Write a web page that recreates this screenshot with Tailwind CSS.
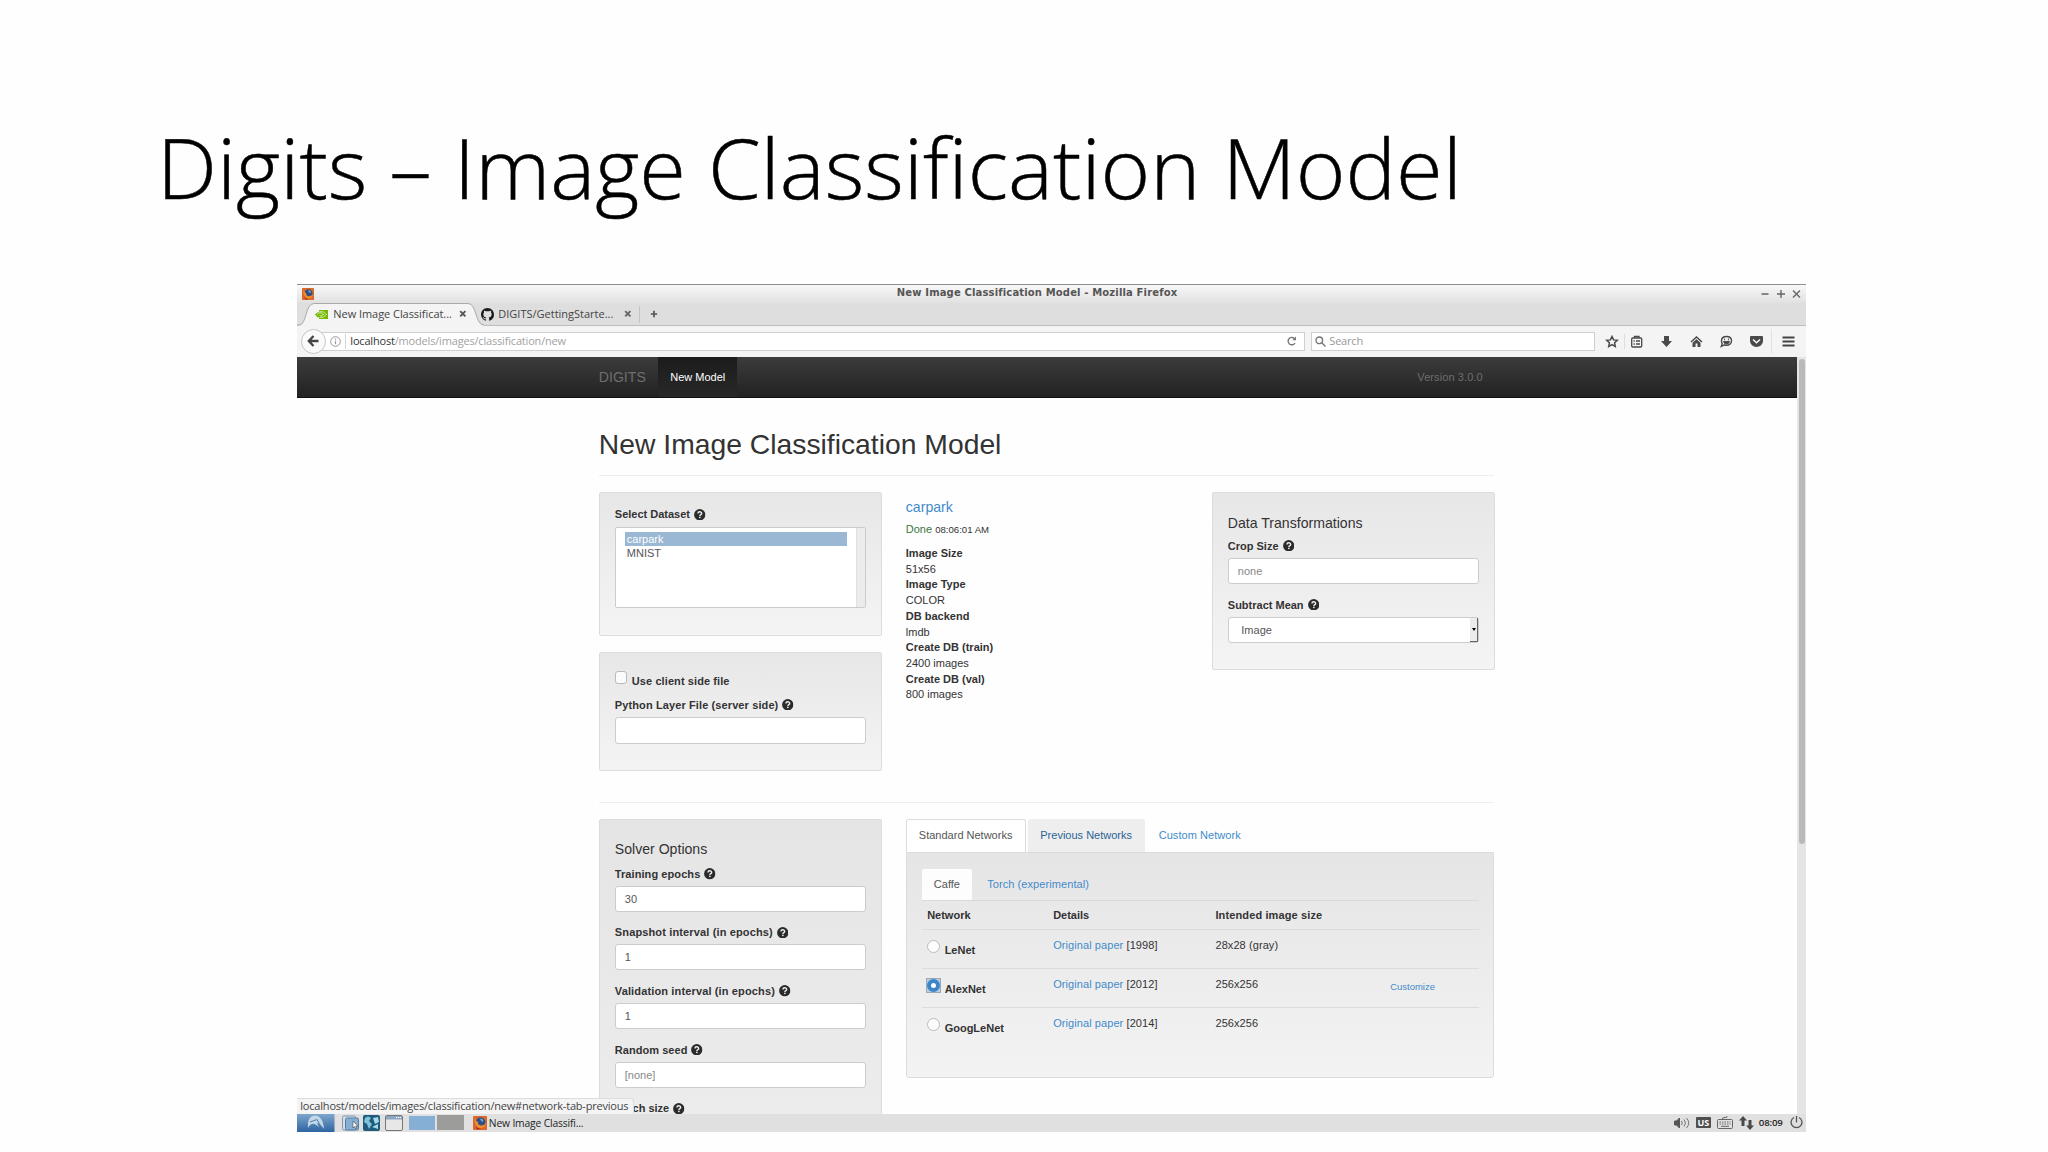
<!DOCTYPE html>
<html lang="en">
<head>
<meta charset="utf-8">
<title>Digits – Image Classification Model</title>
<script src="https://cdn.jsdelivr.net/npm/@tailwindcss/browser@4"></script>
</head>
<body class="w-[2048px] h-[1152px] overflow-hidden bg-[#fefefe]">
<svg class="hidden">
  <symbol id="help" viewBox="0 0 12 12"><circle cx="6" cy="6" r="5.900" fill="#2b2b2b"/><path d="M4.100 4.700C4.100 2.400 8 2.400 8 4.600C8 5.900 6.100 5.900 6.100 7.200" fill="none" stroke="#eee" stroke-width="1.500"/><rect x="5.300" y="8" width="1.600" height="1.500" fill="#eee"/></symbol>
  <symbol id="firefox" viewBox="0 0 14 14"><rect width="14" height="14" rx="1" fill="#d9682b"/><circle cx="7.500" cy="6.600" r="5" fill="#2d4f86"/><path d="M8 2.500Q11 3 10 6Q8 5 7 3.500Z" fill="#6fa8d8"/><path d="M1.500 2Q1 11 7 12.500Q12.500 12.500 13 6Q11.500 9.500 8 9.500Q4.500 9 5 6L3.500 5Z" fill="#f08a2c"/><path d="M2 9Q4 13 9 12.800L4 13.500Z" fill="#a82c1c"/></symbol>
</svg>

<h1 class="pt-[117px] pl-[157px] h-[284px]"><span class="inline-block origin-left scale-x-[1.0226] whitespace-nowrap font-['Open_Sans',sans-serif] font-light text-[83px] leading-[100px] text-black [-webkit-text-stroke:0.500px_#000]">Digits – Image Classification Model</span></h1>

<main class="ml-[297.300px] w-[1508.500px] h-[848px] flex flex-col font-['Liberation_Sans',Arial,sans-serif] text-[11px] leading-4 text-[#333]">
  <!-- window title bar -->
  <header class="h-[19px] shrink-0 border-t border-[#8f8f8f] bg-linear-to-b from-[#f8f8f8] to-[#e1e1e1] flex items-center">
    <svg class="ml-[5px] w-3 h-3"><use href="#firefox"/></svg>
    <div class="flex-1 pb-[2px] text-center font-['DejaVu_Sans',sans-serif] font-bold text-[10px] tracking-[0.150px] text-[#555]">New Image Classification Model - Mozilla Firefox</div>
    <svg class="w-[42px] h-4 mr-[4px]" viewBox="0 0 42 16" fill="none" stroke="#666" stroke-width="1.400"><path d="M1.500 8h7M17 8h8M21 4v8M33 4.500l7 7M40 4.500l-7 7"/></svg>
  </header>
  <!-- browser tabs -->
  <div class="h-[23px] shrink-0 relative bg-[#dedede] border-b border-[#bdbdbd] font-['Open_Sans',sans-serif] text-[#444] flex items-center">
    <svg class="absolute left-0 top-0 w-[190px] h-[23px]" viewBox="0 0 190 23"><path d="M0 22.500H2C10 22.500 8 .5 17 .5H171C180 .5 178 22.500 187 22.500V23H0Z" fill="#f4f4f4"/><path d="M0 22H2C10 22 8 .5 17 .5H171C180 .5 178 22 187 22" fill="none" stroke="#aaa"/></svg>
    <svg class="relative ml-[18px] w-[13px] h-[9px]" viewBox="0 0 13 9"><path d="M4 0H13V9H4Z" fill="#76b900"/><path d="M0 4.500Q4 0 9 4Q6 9 4 7.500Q1.500 7 0 4.500Z" fill="#76b900"/><path d="M2 4.500Q5 1 8.500 4.500Q6 7 4.500 5.500M4.500 1.500Q9 1 11.500 4.500Q9 8 4.500 7.500" fill="none" stroke="#e9f5d5" stroke-width=".8"/></svg>
    <span class="relative ml-[5px] w-[124.500px] whitespace-nowrap tracking-[-0.050px]">New Image Classificat...</span>
    <svg class="relative ml-[1px] w-2 h-2" viewBox="0 0 8 8"><path d="M1.200 1.200l5.200 5.200M6.400 1.200l-5.200 5.200" stroke="#555" stroke-width="1.900"/></svg>
    <svg class="ml-[14.500px] w-[13px] h-[13px]" viewBox="0 0 16 16" fill="#1b1b1b"><path d="M8 0C3.580 0 0 3.580 0 8c0 3.540 2.290 6.530 5.470 7.590.4.070.55-.17.55-.38 0-.19-.01-.82-.01-1.490-2.010.37-2.530-.49-2.690-.94-.09-.23-.48-.94-.82-1.130-.28-.15-.68-.52-.01-.53.63-.01 1.080.58 1.230.82.72 1.210 1.870.87 2.330.66.070-.52.28-.87.51-1.070-1.780-.2-3.640-.89-3.640-3.950 0-.87.31-1.590.82-2.150-.08-.2-.36-1.020.08-2.120 0 0 .67-.21 2.200.82a7.600 7.600 0 014 0c1.530-1.040 2.200-.82 2.200-.82.44 1.100.16 1.920.08 2.120.51.56.82 1.270.82 2.150 0 3.070-1.870 3.750-3.650 3.950.29.25.54.73.54 1.480 0 1.070-.01 1.930-.01 2.200 0 .21.15.46.55.38A8 8 0 0016 8c0-4.420-3.580-8-8-8z"/></svg>
    <span class="ml-[4px] w-[123px] whitespace-nowrap">DIGITS/GettingStarte...</span>
    <svg class="ml-[3px] w-2 h-2" viewBox="0 0 8 8"><path d="M1.200 1.200l5.200 5.200M6.400 1.200l-5.200 5.200" stroke="#666" stroke-width="1.900"/></svg>
    <i class="ml-[6.500px] w-px h-[17px] bg-[#c4c4c4]"></i>
    <svg class="ml-[10px] w-2 h-2" viewBox="0 0 8 8"><path d="M4 .8v6.400M.8 4h6.400" stroke="#555" stroke-width="1.700"/></svg>
  </div>
  <!-- address bar -->
  <div class="h-[31px] pb-px shrink-0 bg-[#f4f4f4] flex items-center font-['Open_Sans',sans-serif]">
    <div class="ml-[3.500px] w-[25px] h-[25px] rounded-full border border-[#c6c6c6] bg-[#fafafa] z-10 flex items-center justify-center shrink-0">
      <svg class="w-3 h-3" viewBox="0 0 12 12" fill="none" stroke="#444" stroke-width="2.300"><path d="M6.500 1L1.800 6l4.700 5M2 6h9.500"/></svg>
    </div>
    <div class="-ml-[6px] w-[985px] h-[19px] bg-white border border-[#cfcfcf] flex items-center pl-[9px] shrink-0">
      <svg class="w-[11px] h-[11px]" viewBox="0 0 11 11" fill="none" stroke="#999"><circle cx="5.500" cy="5.500" r="4.800"/><path d="M5.500 4.800v3.400M5.500 2.600v1.200" stroke-width="1.200"/></svg>
      <i class="ml-[4px] w-px h-[15px] bg-[#d5d5d5]"></i>
      <span class="ml-[4.500px] flex-1 text-[#a2a2a2] whitespace-nowrap tracking-[-0.180px]"><span class="text-[#333]">localhost</span>/models/images/classification/new</span>
      <svg class="mr-[7px] w-[10px] h-[10px]" viewBox="0 0 10 10" fill="none" stroke="#777" stroke-width="1.400"><path d="M8 7A3.700 3.700 0 118 3.200"/><path d="M9 .5V4.200H5.300Z" fill="#777" stroke="none"/></svg>
    </div>
    <div class="ml-[6px] w-[284px] h-[19px] bg-white border border-[#cfcfcf] flex items-center pl-[3px] shrink-0">
      <svg class="w-[11px] h-[11px]" viewBox="0 0 11 11" fill="none" stroke="#777" stroke-width="1.400"><circle cx="4.300" cy="4.300" r="3.300"/><path d="M6.800 6.800L10.500 10.500"/></svg>
      <span class="ml-[3.500px] text-[#999] tracking-[-0.200px]">Search</span>
    </div>
    <div class="flex items-center ml-[10px] text-[#4a4a4a]">
      <svg class="w-[14px] h-[13px]" viewBox="0 0 14 13" fill="none" stroke="#4a4a4a" stroke-width="1.500"><path d="M7 1.500L8.600 4.900 12.300 5.300 9.600 7.800 10.300 11.500 7 9.700 3.700 11.500 4.400 7.800 1.700 5.300 5.400 4.900Z"/></svg>
      <i class="ml-[5px] -mr-[3px] w-px h-[15px] bg-[#ddd]"></i>
      <svg class="w-[30px] h-[13px]" viewBox="0 0 30 13" fill="none" stroke="#4a4a4a" stroke-width="1.300"><rect x="9.700" y="3" width="10" height="9" rx="1"/><path d="M12.500 3V1.500h4.500V3M11.500 6h1.300M14 6h4M11.500 9h1.300M14 9h4"/></svg>
      <svg class="w-[29px] h-[13px]" viewBox="0 0 29 13" fill="#4a4a4a"><path d="M12 1h5v5h3l-5.500 6L9 6h3z"/></svg>
      <svg class="w-[31px] h-[13px]" viewBox="0 0 31 13" fill="#4a4a4a"><path d="M15.500 1l6 5.500-1 1-5-4.500-5 4.500-1-1z"/><path d="M11.500 7.800l4-3.600 4 3.600V12h-3V8.500h-2V12h-3z"/></svg>
      <svg class="w-[29px] h-[13px]" viewBox="0 0 29 13"><path d="M14.500 1.500c3 0 5 1.800 5 4.300s-2 4.500-5 4.500c-.8 0-1.500-.1-2-.4L9.300 11.500l.9-2.800C9.700 8 9.500 7 9.500 5.800c0-2.500 2-4.300 5-4.300z" fill="none" stroke="#4a4a4a" stroke-width="1.400"/><path d="M12.600 3.500v1.800M16.400 3.500v1.800M11.500 6.500h6Q17 9 14.500 9T11.500 6.500z" stroke="#4a4a4a" fill="#4a4a4a"/></svg>
      <svg class="w-[30px] h-[13px]" viewBox="0 0 30 13"><path d="M10 1h11q1 0 1 1v4a6.500 6 0 01-13 0V2q0-1 1-1z" fill="#4a4a4a"/><path d="M12 4.500l3.500 3.300 3.500-3.300" fill="none" stroke="#fff" stroke-width="1.400"/></svg>
      <i class="w-px h-[25px] bg-[#e2e2e2]"></i>
      <svg class="ml-[10px] w-[13px] h-[11px]" viewBox="0 0 13 11" stroke="#444" stroke-width="2"><path d="M.5 1.500h12M.5 5.500h12M.5 9.500h12"/></svg>
    </div>
  </div>
  <!-- page -->
  <div class="h-[756.500px] shrink-0 flex bg-[#e6e5e6] relative">
    <div class="w-[1499.500px] overflow-hidden bg-[#fefefe]">
      <nav class="h-[40.700px] pl-[301.500px] flex items-center bg-linear-to-b from-[#3c3c3c] to-[#222] border-b border-[#101010]">
        <span class="w-[59.500px] text-[14.100px] text-[#6e6e6e]">DIGITS</span>
        <span class="w-[79px] h-full pt-[12px] text-center text-white bg-linear-to-b from-[#1c1c1c] to-[#282828]">New Model</span>
        <span class="ml-[680px] text-[#6e6e6e] tracking-[0.100px]">Version 3.0.0</span>
      </nav>
      <div class="ml-[302px] w-[895px]">
        <h2 class="mt-[26px] pb-[11px] border-b border-[#eee] text-[28.300px] leading-10 -ml-[0.500px]">New Image Classification Model</h2>
        <section class="mt-[16px] h-[311.500px] border-b border-[#eee] grid grid-cols-[282.500px_282.500px_282.500px] gap-x-[24px] items-start">
          <div>
            <div class="h-[144px] rounded-[2px] border border-[#dcdcdc] bg-linear-to-b from-[#e8e7e8] to-[#f5f4f5] px-[14.500px] pt-[13.700px]">
              <div class="flex items-center gap-1 font-bold">Select Dataset<svg class="w-[11.500px] h-[11.500px]"><use href="#help"/></svg></div>
              <div class="mt-[5px] h-[80.500px] rounded-[2px] border border-[#ccc] bg-white flex leading-[14px] text-[#555]">
                <div class="pt-[4px] pl-[9px] w-[240px]">
                  <div class="w-[222px] h-[14px] pl-[2px] bg-[#9ab7d4] text-white">carpark</div>
                  <div class="h-[14px] pl-[2px]">MNIST</div>
                </div>
                <div class="flex-1 bg-[#ebebeb] border-l border-[#e0e0e0]"></div>
              </div>
            </div>
            <div class="mt-[16.500px] h-[118.500px] rounded-[2px] border border-[#dcdcdc] bg-linear-to-b from-[#e8e7e8] to-[#f5f4f5] px-[14.500px] pt-[19.500px] font-bold">
              <div class="flex items-center gap-[4.500px] tracking-[0.090px]"><i class="w-[12.500px] h-[12.500px] -mt-[6px] rounded-[3px] border border-[#bbb] bg-[#fbfbfb]"></i>Use client side file</div>
              <div class="mt-2 flex items-center gap-1 tracking-[0.110px]">Python Layer File (server side)<svg class="w-[11.500px] h-[11.500px]"><use href="#help"/></svg></div>
              <div class="mt-[4.500px] h-[26.500px] rounded-[3px] border border-[#ccc] bg-white"></div>
            </div>
          </div>
          <div class="pt-[7px]">
            <div class="text-[14.100px] text-[#428bca]">carpark</div>
            <div class="mt-[6.400px]"><span class="text-[#3c763d]">Done</span> <small class="text-[9.600px]">08:06:01 AM</small></div>
            <dl class="mt-[8px] leading-[15.700px] [&>dt]:font-bold">
              <dt>Image Size</dt><dd>51x56</dd>
              <dt>Image Type</dt><dd>COLOR</dd>
              <dt>DB backend</dt><dd>lmdb</dd>
              <dt>Create DB (train)</dt><dd>2400 images</dd>
              <dt>Create DB (val)</dt><dd>800 images</dd>
            </dl>
          </div>
          <div class="h-[178.500px] rounded-[2px] border border-[#dcdcdc] bg-linear-to-b from-[#e8e7e8] to-[#f5f4f5] px-[14.500px] pt-[22px]">
            <div class="text-[14.100px]">Data Transformations</div>
            <div class="mt-[7px] flex items-center gap-1 font-bold">Crop Size<svg class="w-[11.500px] h-[11.500px]"><use href="#help"/></svg></div>
            <div class="mt-[4.500px] h-[26px] rounded-[3px] border border-[#ccc] bg-white px-[9px] leading-[25px] text-[#888]">none</div>
            <div class="mt-[12.400px] flex items-center gap-1 font-bold">Subtract Mean<svg class="w-[11.500px] h-[11.500px]"><use href="#help"/></svg></div>
            <div class="mt-[4px] h-[26px] rounded-[3px] border border-[#ccc] bg-white pl-[12.500px] leading-[25px] text-[#555] flex justify-between">Image<span class="w-[8px] bg-[#ececec] border-r-[1.500px] border-b border-[#666] flex items-center justify-center"><svg class="w-1 h-[3px]" viewBox="0 0 4 3"><path d="M0 0h4L2 3z"/></svg></span></div>
          </div>
        </section>
        <section class="mt-4 flex items-start gap-[24px]">
          <div class="w-[282.500px] h-[380px] rounded-[2px] border border-[#dcdcdc] bg-linear-to-b from-[#e6e5e6] to-[#efeeef] px-[14.500px] pt-[21.300px] font-bold">
            <div class="mb-[8.400px] text-[14.100px] font-normal">Solver Options</div>
            <div class="flex items-center gap-1 tracking-[0.080px]">Training epochs<svg class="w-[11.500px] h-[11.500px]"><use href="#help"/></svg></div>
            <div class="mt-1 mb-[12.600px] h-[26px] rounded-[3px] border border-[#ccc] bg-white px-[9px] leading-[25px] font-normal text-[#555]">30</div>
            <div class="flex items-center gap-1 tracking-[0.140px]">Snapshot interval (in epochs)<svg class="w-[11.500px] h-[11.500px]"><use href="#help"/></svg></div>
            <div class="mt-1 mb-[12.600px] h-[26px] rounded-[3px] border border-[#ccc] bg-white px-[9px] leading-[25px] font-normal text-[#555]">1</div>
            <div class="flex items-center gap-1 tracking-[0.140px]">Validation interval (in epochs)<svg class="w-[11.500px] h-[11.500px]"><use href="#help"/></svg></div>
            <div class="mt-1 mb-[12.600px] h-[26px] rounded-[3px] border border-[#ccc] bg-white px-[9px] leading-[25px] font-normal text-[#555]">1</div>
            <div class="flex items-center gap-1 tracking-[0.050px]">Random seed<svg class="w-[11.500px] h-[11.500px]"><use href="#help"/></svg></div>
            <div class="mt-1 mb-[12.600px] h-[26px] rounded-[3px] border border-[#ccc] bg-white px-[9px] leading-[25px] font-normal text-[#888]">[none]</div>
            <div class="flex items-center gap-1">Batch size<svg class="w-[11.500px] h-[11.500px]"><use href="#help"/></svg></div>
          </div>
          <div class="w-[589px]">
            <div class="h-[32.500px] flex gap-[2px] leading-4">
              <span class="w-[120px] pt-[7.200px] text-center border border-b-0 border-[#dcdcdc] rounded-t-[3px] bg-white text-[#555]">Standard Networks</span>
              <span class="w-[117px] pt-[8.200px] text-center rounded-t-[3px] bg-[#eee] text-[#2a6496]">Previous Networks</span>
              <span class="pl-[12px] pt-[8.200px] text-[#428bca] tracking-[0.060px]">Custom Network</span>
            </div>
            <div class="h-[226px] rounded-b-[3px] border border-[#dcdcdc] bg-linear-to-b from-[#e6e5e6] to-[#f4f3f4] pl-[15px] pr-[14px] pt-[16px]">
              <div class="flex h-[32px] border-b border-[#dadada]">
                <span class="w-[50.500px] pt-[7.500px] text-center rounded-t-[2px] bg-[#fdfdfd] text-[#555]">Caffe</span>
                <span class="ml-[15px] pt-[7.500px] text-[#428bca] tracking-[0.080px]">Torch (experimental)</span>
              </div>
              <div class="grid grid-cols-[126px_162.300px_174.700px_1fr] pl-[5.500px] [&>b]:pt-[6.500px] h-[29.500px] border-b border-[#dcdcdc]"><b>Network</b><b>Details</b><b class="tracking-[0.120px]">Intended image size</b></div>
              <div class="grid grid-cols-[126px_162.300px_174.700px_1fr] pl-[5.500px] h-[39px] border-b border-[#dcdcdc] [&>span]:pt-[6.500px] [&>span]:tracking-[0.080px]">
                <b class="flex gap-[4.500px] pt-[12px]"><i class="w-[13px] h-[13px] -mt-[2px] rounded-full border border-[#bbb] bg-[#fdfdfd]"></i>LeNet</b>
                <span><a class="text-[#428bca]">Original paper</a> [1998]</span><span>28x28 (gray)</span>
              </div>
              <div class="grid grid-cols-[126px_162.300px_174.700px_1fr] pl-[5.500px] h-[39px] border-b border-[#dcdcdc] [&>span]:pt-[6.500px] [&>span]:tracking-[0.080px]">
                <b class="flex gap-[3.500px] pt-[12px]"><i class="w-[15px] h-[15px] -ml-px -mt-[3px] border border-[#9aa9b8] bg-[#b9cde2] flex items-center justify-center"><i class="w-[13px] h-[13px] shrink-0 rounded-full border-[4.500px] border-[#3b85c8] bg-white"></i></i>AlexNet</b>
                <span><a class="text-[#428bca]">Original paper</a> [2012]</span><span>256x256</span><a class="pt-[10px] text-[9.500px] text-[#428bca]">Customize</a>
              </div>
              <div class="grid grid-cols-[126px_162.300px_174.700px_1fr] pl-[5.500px] h-[39px] [&>span]:pt-[6.500px] [&>span]:tracking-[0.080px]">
                <b class="flex gap-[4.500px] pt-[12px]"><i class="w-[13px] h-[13px] -mt-[2px] rounded-full border border-[#bbb] bg-[#fdfdfd]"></i>GoogLeNet</b>
                <span><a class="text-[#428bca]">Original paper</a> [2014]</span><span>256x256</span>
              </div>
            </div>
          </div>
        </section>
      </div>
    </div>
    <div class="flex-1 pt-[2px] pl-[2px]"><div class="w-[6px] h-[485px] rounded-[3px] bg-[#b9b9b9]"></div></div>
    <!-- link target shown over the page while hovering a tab -->
    <div class="absolute left-0 bottom-0 w-[337px] h-[15.500px] pl-[3px] rounded-tr-[3px] border-t border-r border-[#ddd] bg-[#f4f4f4] font-['Open_Sans',sans-serif] text-[#444] leading-[13px] whitespace-nowrap tracking-[-0.200px]">localhost/models/images/classification/new#network-tab-previous</div>
  </div>
  <!-- desktop panel -->
  <footer class="h-[18.500px] shrink-0 bg-[#e0e0e0] flex items-center font-['Open_Sans',sans-serif] text-[#1e1e1e]">
    <svg class="w-[37.500px] h-[18.500px]" viewBox="0 0 37.500 18.500"><defs><linearGradient id="g" x2="0" y2="1"><stop stop-color="#7fa6cc"/><stop offset="1" stop-color="#2b639f"/></linearGradient></defs><rect width="37.500" height="18.500" fill="url(#g)"/><path d="M11 14Q10 2 18 1.500Q26 2 27 15Q23 9 20 9L22 13Q17 9 15.500 10Q13 10 11 14Z" fill="#c3d6e8"/><path d="M13 8L20 5.500L23 11" stroke="#4b7fb4" fill="none"/></svg>
    <svg class="ml-[7px] w-[17px] h-4" viewBox="0 0 17 16"><rect x=".5" y="1" width="13" height="14" rx="1.500" fill="#d3dee8" stroke="#7d97b0"/><rect x="3.500" y="3" width="13" height="12" rx="1.500" fill="#86aed2" stroke="#587c9f"/><path d="M11 6v7l1.600-1.500 1.200 2.500 1-.5-1.100-2.400h2z" fill="#fff" stroke="#333" stroke-width=".5"/></svg>
    <svg class="ml-[4px] w-[17px] h-4" viewBox="0 0 17 16"><rect width="17" height="16" rx="2" fill="#1f5b7c"/><path d="M2 3Q5 0 8 3L6 6 9 9 6 14 4 9 1 7Z" fill="#7fc3d8"/><path d="M10 3l5-1 1 5-4 2zM9 12l6-3v5z" fill="#a5d8e4"/></svg>
    <svg class="ml-[5px] w-[18px] h-4" viewBox="0 0 18 16"><rect x=".5" y=".5" width="17" height="15" rx="1.500" fill="#e7e7e7" stroke="#777"/><path d="M1 1h16v3.500H1z" fill="#8ea6c4"/><path d="M11 2.500h5" stroke="#fff" stroke-dasharray="1.300 .7"/></svg>
    <i class="ml-[6px] w-[26px] h-[14px] bg-[#86afd5]"></i>
    <i class="ml-[2px] w-[27px] h-[15px] bg-[#9c9c9a]"></i>
    <svg class="ml-[9px] w-[14px] h-[14px]"><use href="#firefox"/></svg>
    <span class="ml-[2px] flex-1 whitespace-nowrap text-[10.300px] tracking-[-0.150px] font-medium">New Image Classifi...</span>
    <svg class="w-4 h-3" viewBox="0 0 16 12" fill="none" stroke="#777"><path d="M.5 4h2l3-3v10l-3-3h-2z" fill="#555" stroke="#555"/><path d="M7.500 4q1.500 2 0 4M10 2.500q3 3.500 0 7M12.500 1q4.500 5 0 10"/></svg>
    <span class="ml-[6px] w-[15px] h-[11px] rounded-[1px] bg-[#4f4f4f] text-white text-[9px] leading-[11px] font-bold text-center">US</span>
    <svg class="ml-[6px] w-4 h-[13px]" viewBox="0 0 16 13" fill="none" stroke="#666"><rect x=".5" y="3.500" width="15" height="9" rx="1"/><path d="M5 3.500Q5 1.500 8 1.500T10 .3" /><path d="M2.500 6h11M2.500 8h11" stroke-dasharray="1.500 1"/><path d="M4 10.300h8"/></svg>
    <svg class="ml-[6px] w-[15px] h-[14px]" viewBox="0 0 15 14" fill="#4a4a4a"><path d="M4 0l4 4.500H5.500V10h-3V4.500H0zM11 14l4-4.500h-2.500V4h-3v5.500H7z"/></svg>
    <span class="ml-[5px] w-[26px] text-[9.700px] tracking-[-0.200px] font-semibold">08:09</span>
    <svg class="ml-[5px] mr-[3px] w-[13px] h-[13px]" viewBox="0 0 13 13" fill="none" stroke="#555" stroke-width="1.300"><path d="M6.500 0v6.500M4 1.500a5.400 5.400 0 105 0"/></svg>
  </footer>
</main>
</body>
</html>
